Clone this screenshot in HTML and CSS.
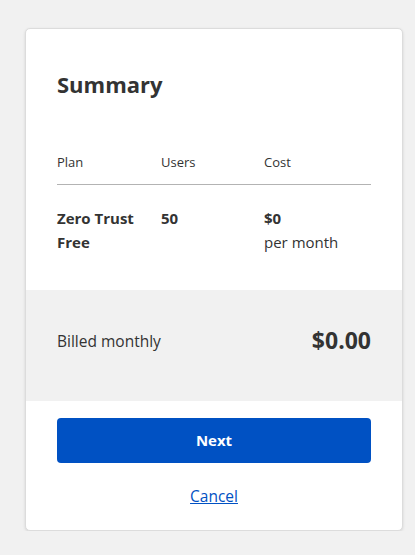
FILE: index.html
```html
<!DOCTYPE html>
<html lang="en">
<head>
<meta charset="utf-8">
<title>Summary</title>
<link rel="stylesheet" href="styles.css">
</head>
<body>
<div class="card">
  <div class="top">
    <h1 class="title">Summary</h1>
    <div class="table">
      <div class="row head">
        <div class="c1">Plan</div>
        <div class="c2">Users</div>
        <div class="c3">Cost</div>
      </div>
      <div class="row body">
        <div class="c1 strong">Zero Trust<br>Free</div>
        <div class="c2 strong">50</div>
        <div class="c3"><span class="strong">$0</span><br>per month</div>
      </div>
    </div>
  </div>
  <div class="band">
    <span class="billed">Billed monthly</span>
    <span class="total">$0.00</span>
  </div>
  <div class="actions">
    <button class="next">Next</button>
    <a class="cancel" href="#">Cancel</a>
  </div>
</div>
</body>
</html>
```
FILE: styles.css
```css
* { box-sizing: border-box; }
html, body { margin: 0; padding: 0; }
body {
  background: #f1f1f1;
  font-family: "Open Sans", "Noto Sans", sans-serif;
  color: #333;
  padding: 28px 12px 0 25px;
}
.card {
  width: 378px;
  background: #fff;
  border: 1px solid #dcdcdc;
  border-radius: 5px;
  box-shadow: 0 1px 3px rgba(0,0,0,0.12);
  overflow: hidden;
}
.top { padding: 40px 31px 0 31px; }
.title {
  margin: 0;
  font-size: 22px;
  line-height: 30px;
  font-weight: 700;
  color: #333;
}
.table { margin-top: 53px; }
.row { display: flex; }
.c1 { width: 104px; }
.c2 { width: 103px; }
.c3 { flex: 1; }
.head {
  font-size: 13px;
  line-height: 20px;
  padding-bottom: 12px;
  border-bottom: 1px solid #b3b3b3;
}
.body {
  font-size: 15px;
  line-height: 24px;
  padding: 21px 0 36px;
}
.strong { font-weight: 700; }
.band {
  background: #f1f1f1;
  height: 111px;
  padding: 0 31px 10px;
  display: flex;
  align-items: center;
  justify-content: space-between;
}
.billed { font-size: 15.5px; }
.total { font-size: 23px; font-weight: 700; margin-bottom: 2px; }
.actions {
  padding: 17px 31px 23px;
  display: flex;
  flex-direction: column;
  align-items: center;
}
.next {
  width: 100%;
  height: 45px;
  background: #0051c3;
  color: #fff;
  border: none;
  border-radius: 4px;
  font-family: inherit;
  font-size: 15px;
  font-weight: 700;
  padding-bottom: 2px;
}
.cancel {
  margin-top: 22px;
  color: #0051c3;
  font-size: 15.5px;
  line-height: 22px;
  text-decoration: underline;
}
```
